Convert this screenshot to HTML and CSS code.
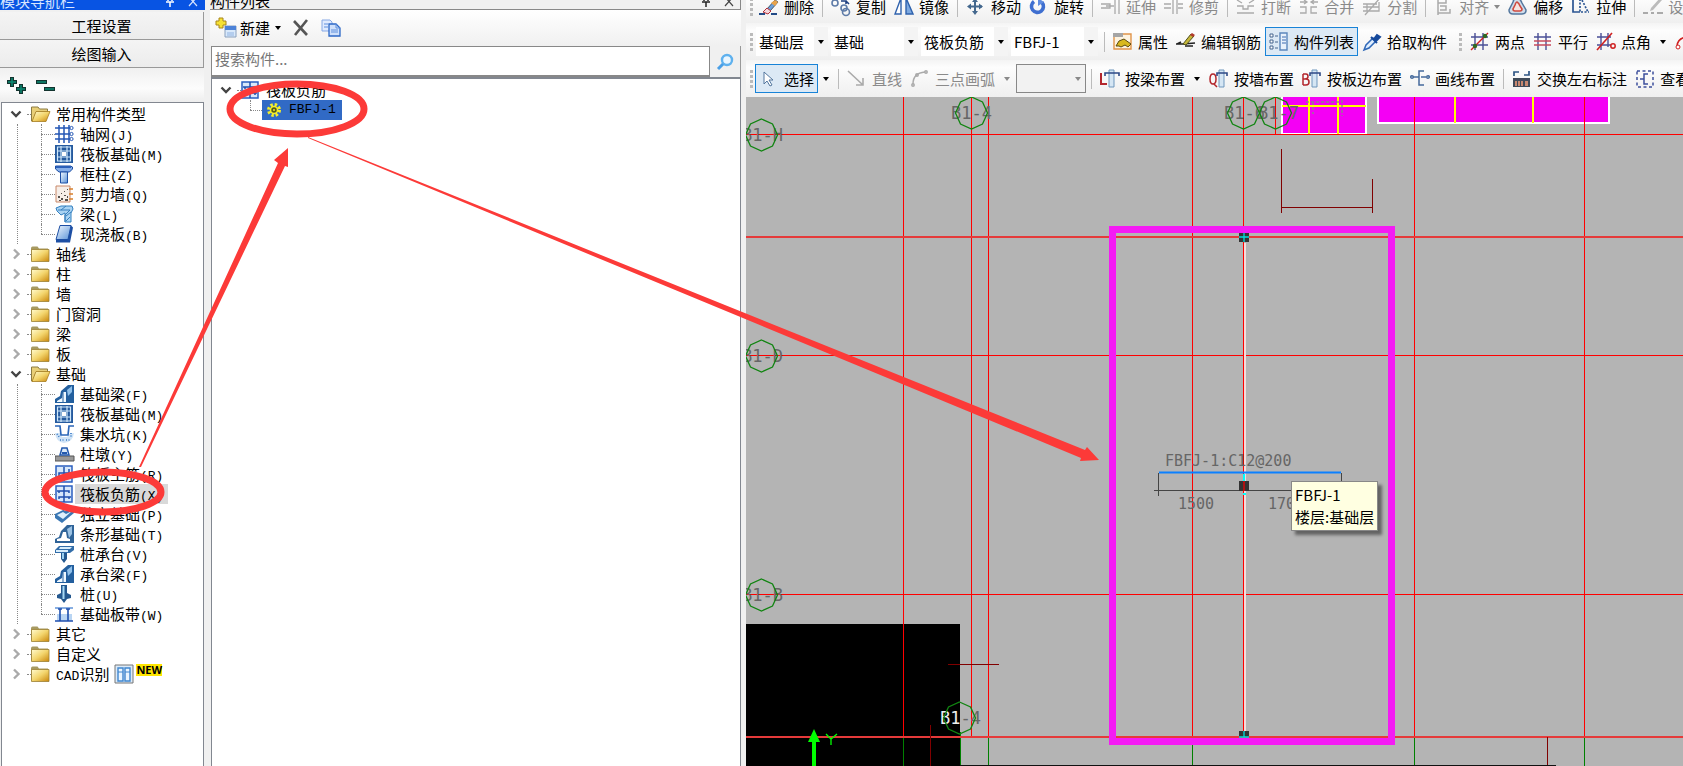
FILE: index.html
```html
<!DOCTYPE html>
<html lang="zh-CN">
<head>
<meta charset="utf-8">
<title>构件列表</title>
<link rel="stylesheet" href="styles.css">
</head>
<body>
<svg class="defs" aria-hidden="true">
  <defs>
    <linearGradient id="gold" x1="0" y1="0" x2="1" y2="1"><stop offset="0" stop-color="#fffbd0"/><stop offset=".5" stop-color="#f3d56c"/><stop offset="1" stop-color="#c9860c"/></linearGradient>
    <linearGradient id="blue" x1="0" y1="0" x2="1" y2="1"><stop offset="0" stop-color="#f2f9ff"/><stop offset="1" stop-color="#5b93d8"/></linearGradient>
    <symbol id="folder" viewBox="0 0 20 20"><path d="M0 4.500q0-2 1.500-2h5l1.500 2h9v12H0z" fill="#a79a62"/><path d="M0.500 5.500h17.500v12H0.500z" fill="url(#gold)" stroke="#9c8034" stroke-width=".8"/></symbol>
    <symbol id="folder-open" viewBox="0 0 20 20"><path d="M0.500 3h6.500l1.500 2h8v3H5L2 17H0.500z" fill="#e8cf78" stroke="#8c7c44"/><path d="M5 7.500H19l-4 10H1z" fill="url(#gold)" stroke="#a67c20" stroke-width=".8"/></symbol>
    <symbol id="open" viewBox="0 0 12 12"><path d="M1.500 3.500 6 8l4.500-4.500" fill="none" stroke="#444" stroke-width="2.400"/></symbol>
    <symbol id="closed" viewBox="0 0 12 12"><path d="M4 1.500 8.500 6 4 10.500" fill="none" stroke="#aaa" stroke-width="2.400"/></symbol>
    <symbol id="grid" viewBox="0 0 20 20"><path d="M4 1v18M9 1v18M14 1v18M0 4h15M0 10h15M0 15h15" stroke="#2457b5" stroke-width="1.500"/><g fill="#fff" stroke="#2457b5"><circle cx="16.500" cy="4" r="1.600"/><circle cx="16.500" cy="10" r="1.600"/><circle cx="16.500" cy="15" r="1.600"/></g></symbol>
    <symbol id="raft" viewBox="0 0 20 20"><path d="M0 1h18v18H0z" fill="#255a9e"/><path d="M6 2v16M12 2v16M2 7h14M2 13h14M2.500 3h13v14h-13z" fill="none" stroke="#cfe8fb" stroke-width="1.200"/><path d="M7 8h4v4H7z" fill="#fff"/></symbol>
    <symbol id="column" viewBox="0 0 20 20"><path d="M0.500 2h15l2 1v2l-3 3H4L0.500 5z" fill="#86aee8" stroke="#1d4fa4"/><path d="M5.500 8h7v11h-7z" fill="url(#blue)" stroke="#1d4fa4"/><path d="M1 3h15" stroke="#2b5fb8" stroke-width="2"/></symbol>
    <symbol id="wall" viewBox="0 0 20 20"><path d="M1 2h14v16H1z" fill="#f6eee8" stroke="#c98868"/><g fill="#55504c"><path d="M3 12h2v2H3zM6 14h2v2H6zM4 16h2v1H4zM9 11h2v1H9zM10 15h3v2h-3zM12 12h1v2h-1zM6 9h1v1H6zM9 7h1v1H9zM12 5h1v1h-1z"/></g><path d="M14 5h4M14 10h4M14 15h4" stroke="#d8802c" stroke-width="1.600"/></symbol>
    <symbol id="beam" viewBox="0 0 20 20"><path d="M1 4l5-2h11l1 3-2 4v9h-6V9L6 11 2 7z" fill="#a9d3f3" stroke="#3380c0"/><path d="M3 6h12l-5 5v7M6 6l5-4M11 17l4-4M11 12l5-4" fill="none" stroke="#377fbd"/></symbol>
    <symbol id="slab" viewBox="0 0 20 20"><path d="M5 1.500h11l-3 14H1z" fill="url(#blue)" stroke="#1d4fa4"/><path d="M1 15h12l3-13.500 2 2-3 15H1z" fill="#1d4fa4"/></symbol>
    <symbol id="fbeam" viewBox="0 0 20 20"><path d="M0 19v-4l5-3 1-5 7-6h6v18z" fill="#235f9e"/><path d="M2 17l5-3 1-6h3v10H2z" fill="#eff8ff"/><path d="M12 6l5-4v6l-4 4z" fill="#8fc0ea"/><path d="M8 8v10" stroke="#235f9e"/></symbol>
    <symbol id="pit" viewBox="0 0 20 20"><path d="M0 9q1 9 9 10 9-1 10-10l-5 1-2 3H7l-2-4z" fill="#cfe3f6"/><path d="M0 2h5l1 9h7l1-9h5" fill="none" stroke="#2b66b8" stroke-width="1.700"/><path d="M2 10l3 4M5 16h4M11 16h4M16 9v5" stroke="#3d7dc8" stroke-dasharray="1 1.500" stroke-width="1.700"/></symbol>
    <symbol id="pier" viewBox="0 0 20 20"><path d="M0 12h19v5H0z" fill="#999" stroke="#555"/><path d="M5 11 7 4h5l2 7z" fill="#dceaf8" stroke="#2259ae" stroke-width="1.500"/><path d="M7 9h5" stroke="#2259ae" stroke-width="2"/></symbol>
    <symbol id="mainbar" viewBox="0 0 20 20"><path d="M1 2h16v16H1z" fill="#d8e8fa" stroke="#2b5fc0" stroke-width="1.500"/><path d="M4 14V9h10V5M9 3v14" fill="none" stroke="#1f4fae" stroke-width="1.500"/></symbol>
    <symbol id="negbar" viewBox="0 0 20 20"><path d="M1 2h16v16H1z" fill="#d8e8fa" stroke="#2b5fc0" stroke-width="1.500"/><path d="M9 2v16M4 9V7h10v2M4 15v-2h10v2M2 7h3M13 13h3" fill="none" stroke="#1f4fae" stroke-width="1.500"/></symbol>
    <symbol id="isolated" viewBox="0 0 20 20"><path d="M0 10l8-4 11-4v7L7 19l-7-5z" fill="#3a77b4"/><path d="M2 11l6-3 3 2 6-3-9 8zM7 4l4-2 4 2-5 3z" fill="#dff0fc"/></symbol>
    <symbol id="strip" viewBox="0 0 20 20"><path d="M0 19v-4l4-2 2-6 6-6h7v18z" fill="#2f6398"/><path d="M2 17v-2l4-1 2-6h3l1 6 3 1v2z" fill="#fff"/><path d="M12 5l5-3v8l-3 4z" fill="#9bc2e4"/></symbol>
    <symbol id="cap" viewBox="0 0 20 20"><path d="M4 2h15v4l-4 3H0V6z" fill="#326da9"/><path d="M1 6h12v2H1zM5 3h12l-2 2H4z" fill="#d8edfb"/><path d="M6 9h6v6l-3 4-3-4z" fill="#24588f"/><path d="M7 9h2v6H7z" fill="#9cd0f0"/></symbol>
    <symbol id="pile" viewBox="0 0 20 20"><path d="M6 1h6v8l4 2v3l-4 1-3 4-3-4-4-1v-3l4-2z" fill="#24588f"/><path d="M7.500 2h2v13h-2z" fill="#a8daf5"/></symbol>
    <symbol id="band" viewBox="0 0 20 20"><path d="M2 10h15v7H2z" fill="#b9d5f3"/><path d="M0 4h18" stroke="#5f93d8" stroke-width="1.500"/><path d="M0 17h18M5 5v12M13 5v12M3 5h4M11 5h4" stroke="#1f4fae" stroke-width="1.600"/></symbol>
    <symbol id="cad" viewBox="0 0 20 20"><path d="M1 1h18v18H1z" fill="#dbeaf8" stroke="#777"/><path d="M4 4h5v13H4zM11 4h5v13h-5z" fill="#e9f5ff" stroke="#3f86cf" stroke-width="1.400"/><path d="M4 8h5M11 8h5" stroke="#3f86cf"/></symbol>
  </defs>
</svg>

<main class="app">
  <nav class="nav" aria-label="模块导航栏">
    <header class="title title-active">
      <h2>模块导航栏</h2>
      <span class="title-tools">
        <svg width="10" height="18" viewBox="0 0 10 18"><path d="M3 4v6M7 4v6M1 11h8M5 11v5" stroke="#fff" stroke-width="1.500"/></svg>
        <svg width="10" height="18" viewBox="0 0 10 18"><path d="M1 6l8 9M9 6l-8 9" stroke="#d5e4ff" stroke-width="1.200"/></svg>
      </span>
    </header>
    <button class="tab">工程设置</button>
    <button class="tab">绘图输入</button>
    <div class="expand">
      <button aria-label="全部展开"><svg width="22" height="20" viewBox="0 0 22 20"><path d="M6 1v10M1 6h10M15 8v10M10 13h10" stroke="#14342f" stroke-width="4"/><path d="M6 2v8M2 6h8M15 9v8M11 13h8" stroke="#0a8a74" stroke-width="1.500"/></svg></button>
      <button aria-label="全部折叠"><svg width="22" height="20" viewBox="0 0 22 20"><path d="M1 6h11M9 13h11" stroke="#14342f" stroke-width="4"/><path d="M2 6h9M10 13h9" stroke="#0a8a74" stroke-width="1.500"/></svg></button>
    </div>
    <ul class="tree">
      <li><div class="row"><svg class="chev"><use href="#open"/></svg><svg class="pic"><use href="#folder-open"/></svg><span>常用构件类型</span></div>
        <ul class="branch">
          <li><svg class="pic"><use href="#grid"/></svg><span>轴网<i>(J)</i></span></li>
          <li><svg class="pic"><use href="#raft"/></svg><span>筏板基础<i>(M)</i></span></li>
          <li><svg class="pic"><use href="#column"/></svg><span>框柱<i>(Z)</i></span></li>
          <li><svg class="pic"><use href="#wall"/></svg><span>剪力墙<i>(Q)</i></span></li>
          <li><svg class="pic"><use href="#beam"/></svg><span>梁<i>(L)</i></span></li>
          <li><svg class="pic"><use href="#slab"/></svg><span>现浇板<i>(B)</i></span></li>
        </ul></li>
      <li><div class="row"><svg class="chev"><use href="#closed"/></svg><svg class="pic"><use href="#folder"/></svg><span>轴线</span></div></li>
      <li><div class="row"><svg class="chev"><use href="#closed"/></svg><svg class="pic"><use href="#folder"/></svg><span>柱</span></div></li>
      <li><div class="row"><svg class="chev"><use href="#closed"/></svg><svg class="pic"><use href="#folder"/></svg><span>墙</span></div></li>
      <li><div class="row"><svg class="chev"><use href="#closed"/></svg><svg class="pic"><use href="#folder"/></svg><span>门窗洞</span></div></li>
      <li><div class="row"><svg class="chev"><use href="#closed"/></svg><svg class="pic"><use href="#folder"/></svg><span>梁</span></div></li>
      <li><div class="row"><svg class="chev"><use href="#closed"/></svg><svg class="pic"><use href="#folder"/></svg><span>板</span></div></li>
      <li><div class="row"><svg class="chev"><use href="#open"/></svg><svg class="pic"><use href="#folder-open"/></svg><span>基础</span></div>
        <ul class="branch">
          <li><svg class="pic"><use href="#fbeam"/></svg><span>基础梁<i>(F)</i></span></li>
          <li><svg class="pic"><use href="#raft"/></svg><span>筏板基础<i>(M)</i></span></li>
          <li><svg class="pic"><use href="#pit"/></svg><span>集水坑<i>(K)</i></span></li>
          <li><svg class="pic"><use href="#pier"/></svg><span>柱墩<i>(Y)</i></span></li>
          <li><svg class="pic"><use href="#mainbar"/></svg><span>筏板主筋<i>(R)</i></span></li>
          <li><svg class="pic"><use href="#negbar"/></svg><span class="current">筏板负筋<i>(X)</i></span></li>
          <li><svg class="pic"><use href="#isolated"/></svg><span>独立基础<i>(P)</i></span></li>
          <li><svg class="pic"><use href="#strip"/></svg><span>条形基础<i>(T)</i></span></li>
          <li><svg class="pic"><use href="#cap"/></svg><span>桩承台<i>(V)</i></span></li>
          <li><svg class="pic"><use href="#fbeam"/></svg><span>承台梁<i>(F)</i></span></li>
          <li><svg class="pic"><use href="#pile"/></svg><span>桩<i>(U)</i></span></li>
          <li><svg class="pic"><use href="#band"/></svg><span>基础板带<i>(W)</i></span></li>
        </ul></li>
      <li><div class="row"><svg class="chev"><use href="#closed"/></svg><svg class="pic"><use href="#folder"/></svg><span>其它</span></div></li>
      <li><div class="row"><svg class="chev"><use href="#closed"/></svg><svg class="pic"><use href="#folder"/></svg><span>自定义</span></div></li>
      <li><div class="row"><svg class="chev"><use href="#closed"/></svg><svg class="pic"><use href="#folder"/></svg><span><i>CAD</i>识别</span><svg class="pic"><use href="#cad"/></svg><b class="new">NEW</b></div></li>
    </ul>
  </nav>

  <section class="list" aria-label="构件列表">
    <header class="title">
      <h2>构件列表</h2>
      <span class="title-tools">
        <svg width="10" height="18" viewBox="0 0 10 18"><path d="M3 4v6M7 4v6M1 11h8M5 11v5" stroke="#222" stroke-width="1.500"/></svg>
        <svg width="10" height="18" viewBox="0 0 10 18"><path d="M1 6l8 9M9 6l-8 9" stroke="#444" stroke-width="1.200"/></svg>
      </span>
    </header>
    <div class="list-tools">
      <button class="new-item"><svg width="22" height="22" viewBox="0 0 22 22"><path d="M4 1h4v3h3v4H8v3H4V8H1V4h3z" fill="#f7e233" stroke="#a8861c"/><path d="M10 9h11v11H10z" fill="#d9e9fb" stroke="#8aa0bd"/><path d="M10 9h11v4H10z" fill="#4c82d8"/><path d="M12 16h7M12 18h7" stroke="#8fb1e0"/></svg>新建<span class="caret"></span></button>
      <button aria-label="删除"><svg width="16" height="18" viewBox="0 0 16 18"><path d="M1 2l13 14M14 1 2 16" stroke="#555" stroke-width="2.600"/></svg></button>
      <button aria-label="复制"><svg width="20" height="18" viewBox="0 0 20 18"><path d="M1 1h8l2 2v9H1z" fill="#dfeaff" stroke="#86a8e4"/><path d="M8 5h7l4 4v8H8z" fill="#cfe0fb" stroke="#2c67c6" stroke-width="1.300"/><path d="M15 5v4h4M10 11h7M10 13h7M3 5h4M3 8h4" fill="none" stroke="#5f8fdc"/></svg></button>
    </div>
    <form class="search">
      <input type="text" placeholder="搜索构件..." aria-label="搜索构件">
      <button type="button" aria-label="搜索"><svg width="18" height="18" viewBox="0 0 18 18"><circle cx="11" cy="7" r="5" fill="#eaf6ff" stroke="#5fb1ee" stroke-width="2.400"/><path d="M7 11l-5 5" stroke="#4a9fe6" stroke-width="3"/></svg></button>
    </form>
    <ul class="tree items">
      <li><div class="row"><svg class="chev"><use href="#open"/></svg><svg class="pic"><use href="#negbar"/></svg><span>筏板负筋</span></div>
        <ul class="branch">
          <li><span class="picked"><svg width="14" height="14" viewBox="0 0 14 14"><circle cx="7" cy="7" r="5" fill="none" stroke="#f4ee2a" stroke-width="4" stroke-dasharray="2.200 1.727"/><circle cx="7" cy="7" r="3.500" fill="#555b18" stroke="#f4ee2a" stroke-width="1.500"/><circle cx="7" cy="7" r="1" fill="#f4ee2a"/></svg><i>FBFJ-1</i></span></li>
        </ul></li>
    </ul>
  </section>

  <section class="work">
    <div class="bars">
      <div class="bar bar-cut">
        <span class="grip"></span>
        <button class="tool"><svg viewBox="0 0 20 20"><path d="M8 12 16 3l3 2-8 9z" fill="#6aa0dc" stroke="#456"/><path d="M12 6 16 3l3 2-3 4z" fill="#e8a34a"/><path d="M4 15l4-4 4 3-3 3z" fill="#f5d7dc" stroke="#b03038"/><path d="M0 17h6M12 17h6" stroke="#224a86" stroke-width="2"/></svg>删除</button>
        <span class="sep"></span>
        <button class="tool"><svg viewBox="0 0 20 20" fill="none" stroke="#5f7ca8" stroke-width="1.600"><circle cx="4" cy="6" r="3"/><circle cx="13" cy="11" r="3"/><circle cx="15" cy="15" r="3.500"/><path d="M10 4h5v3M15 4l3 3" stroke="#1e3f80"/></svg>复制</button>
        <button class="tool"><svg viewBox="0 0 20 20"><path d="M7 1v16H1z" fill="#fff" stroke="#2f62ad" stroke-width="1.400"/><path d="M12 1v16h7z" fill="#7da9e0" stroke="#2f62ad" stroke-width="1.400"/></svg>镜像</button>
        <span class="sep"></span>
        <button class="tool"><svg viewBox="0 0 20 20"><path d="M9 3v13M3 9.500h13" stroke="#44688e" stroke-width="2"/><path d="M9 1l3 4H6zM9 18l3-4H6zM1 9.500l4-3v6zM17 9.500l-4-3v6z" fill="#44688e"/></svg>移动</button>
        <button class="tool"><svg viewBox="0 0 20 20"><path d="M5 4.500a6 6 0 1 0 8 1" fill="none" stroke="#3f6fd0" stroke-width="3.600"/><path d="M9 1v8l6-4z" fill="#5f8ce0"/></svg>旋转</button>
        <span class="sep"></span>
        <button class="tool" disabled><svg viewBox="0 0 20 20" fill="none" stroke="#aaa" stroke-width="1.300"><path d="M0 7h9v4H0M5 9h8M14 2v15M18 2v15"/></svg>延伸</button>
        <button class="tool" disabled><svg viewBox="0 0 20 20" fill="none" stroke="#aaa" stroke-width="1.300"><path d="M0 7h7M0 11h7M9 2v15M13 2v15M14 7h5M14 11h5"/></svg>修剪</button>
        <span class="sep"></span>
        <button class="tool" disabled><svg viewBox="0 0 20 20" fill="none" stroke="#aaa" stroke-width="1.300"><path d="M1 3l5 3M18 3l-5 3M1 9h6v3h5V9h6M1 16h17"/></svg>打断</button>
        <button class="tool" disabled><svg viewBox="0 0 20 20" fill="none" stroke="#aaa" stroke-width="1.300"><path d="M1 5h6M19 5h-6M5 3l3 2-3 2M15 3l-3 2 3 2M1 10h6v6H1M18 10h-6v6h6"/></svg>合并</button>
        <button class="tool" disabled><svg viewBox="0 0 20 20" fill="none" stroke="#aaa" stroke-width="1.300"><path d="M1 7h14M1 14h16V5M5 7v7M3 18 18 1M1 10h16"/></svg>分割</button>
        <span class="sep"></span>
        <button class="tool" disabled><svg viewBox="0 0 20 20" fill="none" stroke="#aaa" stroke-width="1.500"><path d="M4 0v18M4 2h8v4H4M6 9h6v4H6M4 16h12v-4"/></svg>对齐<span class="caret"></span></button>
        <button class="tool"><svg viewBox="0 0 20 20"><path d="M9 1q3 0 5 5l4 7q0 4-4 4H5q-4 0-4-4l4-8q1-4 4-4z" fill="#cfdcea" stroke="#54779e" stroke-width="1.500"/><path d="M9 5q2 1 3 4l2 3q0 2-2 2H7q-2 0-2-2l2-4q1-3 2-3z" fill="#f5e3e0" stroke="#cf4b40" stroke-width="1.600"/></svg>偏移</button>
        <button class="tool"><svg viewBox="0 0 20 20" fill="none" stroke="#2b5593" stroke-width="1.700"><path d="M2 1v14h7M2 2h7"/><path d="M9 2v13h9M11 3l6 12" stroke-dasharray="2 1.500"/></svg>拉伸</button>
        <span class="sep"></span>
        <button class="tool" disabled><svg viewBox="0 0 20 20"><path d="M17 1 8 11l-1 3 3-1 9-10z" fill="#bbb"/><path d="M0 16h5M8 16h3M14 16h6" stroke="#aaa" stroke-width="2"/></svg>设置</button>
      </div>
      <div class="bar">
        <span class="grip"></span>
        <div class="combos">
          <label class="combo short"><select aria-label="楼层"><option>基础层</option></select></label>
          <label class="combo"><select aria-label="类别"><option>基础</option></select></label>
          <label class="combo"><select aria-label="构件类型"><option>筏板负筋</option></select></label>
          <label class="combo"><select aria-label="构件"><option>FBFJ-1</option></select></label>
        </div>
        <span class="sep"></span>
        <button class="tool"><svg viewBox="0 0 20 20"><path d="M1 2h17v15H1z" fill="#fdf3e0" stroke="#e0944a" stroke-width="1.400"/><path d="M0 1h10v4H0z" fill="#a5a5a5"/><path d="M3 14l3-5 5-2 7 5-3 3-3-2-4 2-2-1z" fill="#d8b81e" stroke="#5c4a10"/></svg>属性</button>
        <button class="tool"><svg viewBox="0 0 20 20"><path d="M0 12h7l12-1M1 12l4-2M9 14h8" fill="none" stroke="#222" stroke-width="1.500"/><path d="M7 12 15 2l3 2L10 13z" fill="#c6b73a" stroke="#50501a"/><path d="M14 3l2-2 3 2-2 2z" fill="#b23a2c"/></svg>编辑钢筋</button>
        <button class="tool active"><svg viewBox="0 0 20 20"><path d="M1 2h3v3H1zM1 8h3v3H1zM1 14h3v3H1z" fill="#fff" stroke="#44648e"/><path d="M6 4h3M6 10h3M6 16h3" stroke="#44648e"/><path d="M11 1h7v17h-7z" fill="#e8f1fb" stroke="#5b87bd" stroke-width="1.400"/><path d="M13 5h4M13 8h4M13 11h4" stroke="#3c6bb0"/></svg>构件列表</button>
        <button class="tool"><svg viewBox="0 0 20 20"><path d="M2 18l2-5 7-7 3 3-7 7z" fill="#dfeeff" stroke="#2f68b8" stroke-width="1.500"/><path d="M9 5l6 6M12 7l3-4 3 2-4 4z" fill="#174a9c" stroke="#174a9c" stroke-width="2"/></svg>拾取构件</button>
        <span class="grip apart"></span>
        <button class="tool"><svg viewBox="0 0 20 20"><path d="M5 1v17M13 1v17M1 5h17M1 13h17" stroke="#4a4f96" stroke-width="1.400"/><path d="M1 18 18 1" stroke="#d02020" stroke-width="1.500"/><circle cx="5" cy="14" r="2.200" fill="#2f6a22"/><circle cx="15" cy="4" r="2.200" fill="#2f6a22"/></svg>两点</button>
        <button class="tool"><svg viewBox="0 0 20 20"><path d="M5 1v17M13 1v17M1 5h17" stroke="#4a4f96" stroke-width="1.400"/><path d="M1 9h17M1 13h17" stroke="#c64a5e" stroke-width="1.400"/></svg>平行</button>
        <button class="tool"><svg viewBox="0 0 20 20"><path d="M5 1v17M12 1v14M1 5h14M1 13h14" stroke="#4a4f96" stroke-width="1.400"/><path d="M1 18 16 1" stroke="#d02020" stroke-width="1.600"/><circle cx="17" cy="14" r="2.200" fill="none" stroke="#d02020" stroke-width="1.500"/></svg>点角</button>
        <button class="split" aria-label="点角选项"><span class="caret"></span></button>
        <button class="tool"><svg viewBox="0 0 20 20"><path d="M2 14Q3 5 14 5" fill="none" stroke="#d02020" stroke-width="1.600"/><circle cx="3" cy="15" r="2" fill="#fff" stroke="#d02020"/></svg>三点辅轴</button>
      </div>
      <div class="bar">
        <span class="grip"></span>
        <button class="tool active"><svg viewBox="0 0 20 20"><path d="M5 3v12l3-3 3 5 2-1-3-5h4z" fill="#fff" stroke="#54779e"/></svg>选择</button>
        <button class="split" aria-label="选择选项"><span class="caret"></span></button>
        <span class="sep"></span>
        <button class="tool" disabled><svg viewBox="0 0 20 20"><path d="M1 2l15 14M9 16h7V9" fill="none" stroke="#aaa" stroke-width="1.600"/></svg>直线</button>
        <button class="tool" disabled><svg viewBox="0 0 20 20" fill="none" stroke="#aaa" stroke-width="1.500"><path d="M3 15Q3 4 15 3"/><circle cx="3" cy="16" r="1.200"/><circle cx="7" cy="6" r="1.200"/><circle cx="16" cy="3" r="1.200"/></svg>三点画弧</button>
        <button class="split" disabled aria-label="画弧选项"><span class="caret"></span></button>
        <label class="combo framed"><select aria-label="绘制方式"><option></option></select></label>
        <span class="sep"></span>
        <button class="tool"><svg viewBox="0 0 20 20"><path d="M1 4v11h6" fill="none" stroke="#b3262c" stroke-width="2"/><path d="M9 1h5v17H9z" fill="#d5e6f4" stroke="#6f97bd"/><path d="M5 7V4h14v3" fill="none" stroke="#2e4a86" stroke-width="1.600"/></svg>按梁布置</button>
        <button class="split" aria-label="按梁布置选项"><span class="caret"></span></button>
        <button class="tool"><svg viewBox="0 0 20 20"><path d="M5 15l3 3M4 5q-3 0-3 5t3 5q3 0 3-5T4 5" fill="none" stroke="#b3262c" stroke-width="1.500"/><path d="M10 1h5v17h-5z" fill="#d5e6f4" stroke="#6f97bd"/><path d="M8 7V4h10v3" fill="none" stroke="#2e4a86" stroke-width="1.600"/></svg>按墙布置</button>
        <button class="tool"><svg viewBox="0 0 20 20"><path d="M1 5v11M1 5h3q2 0 2 2.500T3 10h1q3 0 3 3t-3 3H1M1 10h3" fill="none" stroke="#b3262c" stroke-width="1.500"/><path d="M10 1h5v17h-5z" fill="#d5e6f4" stroke="#6f97bd"/><path d="M8 7V4h10v3" fill="none" stroke="#2e4a86" stroke-width="1.600"/></svg>按板边布置</button>
        <button class="tool"><svg viewBox="0 0 20 20" fill="none" stroke="#456a9c" stroke-width="1.500"><path d="M14 2H9v14h5M3 8h6M11 8h5"/><circle cx="2" cy="8" r="1.300"/><circle cx="18" cy="8" r="1.300"/></svg>画线布置</button>
        <span class="sep"></span>
        <button class="tool"><svg viewBox="0 0 20 20"><path d="M2 7V3h5M12 6h5V2" fill="none" stroke="#2e5584" stroke-width="1.700"/><path d="M1 9h17v9H1z" fill="#3f4a58"/><path d="M3 12h2v5H3zM6 12h2v5H6zM9 12h2v5H9zM13 12h3v5h-3z" fill="#c88870"/></svg>交换左右标注</button>
        <button class="tool"><svg viewBox="0 0 20 20" fill="none" stroke="#3d4f9c" stroke-width="1.500"><path d="M2 2h16v16H2z" stroke-dasharray="3 2.500"/><path d="M13 5H9v10h4M5 10h4"/></svg>查看布筋</button>
      </div>
    </div>

    <div class="canvas">
      <svg class="drawing">
        <g transform="translate(-746 -97)">
          <path d="M746 624h214v142H746z" fill="#000"/>
          <g fill="#f400f4" stroke="#fff" stroke-width="2"><path d="M1282 90h84v44h-84z"/><path d="M1378 90h231v33h-231z"/></g>
          <path d="M1309 97v37M1338 97v37M1282 106h84M1455 97v26M1533 97v26" stroke="#ff0" stroke-width="2"/>
          <path d="M1313 102v12M1342 100v16M1306 102h34" stroke="#888" stroke-width="2" stroke-dasharray="3 2" opacity=".7"/>
          <g stroke="#008000" fill="none"><path d="M903.500 737v29M960.500 732v34M988.500 737v29M1192.500 737v29M1414.500 737v29M1584.500 737v29"/></g>
          <g stroke="#f00" fill="none">
            <path d="M903.500 97v640M971.500 97v640M988.500 97v640M1192.500 97v640M1243.500 97v640M1275.500 97v38M1414.500 97v640M1584.500 97v640"/>
            <path d="M746 134.500h937M746 355.500h937M746 594.500h937"/>
            <path d="M746 237h937M746 737h937" stroke="#e53a3a" stroke-width="2"/>
          </g>
          <g stroke="#800000" fill="none"><path d="M1281.500 149v64M1281 207.500h91M1372.500 179v34M948 664.500h51M930.500 725v41M1547.500 737v29"/></g>
          <path d="M960 765.500h596" stroke="#111"/>
          <path d="M1245 243v488" stroke="#f5dcdc" stroke-width="2"/>
          <g class="mark">
            <text x="951" y="119">B1-4</text><text x="1224" y="119">B1-6</text><text x="1258" y="119">B1-7</text>
            <text x="742" y="141">B1-H</text><text x="742" y="362">B1-D</text><text x="742" y="601">B1-B</text>
            <text x="940" y="724"><tspan class="light">B1</tspan>-4</text>
          </g>
          <g fill="none" stroke="#118511" stroke-width="1.300">
            <path id="ring" d="M971.500 97l11 5 5 11-5 11-11 5-11-5-5-11 5-11z"/>
            <use href="#ring" x="272"/><use href="#ring" x="304"/>
            <use href="#ring" x="-210" y="22"/><use href="#ring" x="-210" y="243"/><use href="#ring" x="-210" y="482"/><use href="#ring" x="-12" y="605"/>
          </g>
          <path d="M812 766v-24h-4l6-13 6 13h-4v24z" fill="#0f0"/><path d="M826 734l5 5 6-5M831 739v6" fill="none" stroke="#0f0" stroke-width="1.300"/>
          <g fill="none" stroke="#444"><path d="M1158.500 496v-23M1341.500 473v8M1154 490.500h187"/></g>
          <path d="M1159 472.500h182" stroke="#0a80ff" stroke-width="2"/>
          <path d="M1239 481h10v10h-10z" fill="#333"/><path d="M1244 480v11" stroke="#b01010" stroke-width="2"/><path d="M1244 474v7M1243 494h3" stroke="#0ff" stroke-width="2"/>
          <g fill="#333"><path d="M1239 232h10v10h-10z"/><path d="M1239 731h10v6h-10z"/></g>
          <path d="M1239 237h10M1244 232v10M1239 737h10M1244 731v6" stroke="#0dd" stroke-width="1.300"/>
          <g class="dim"><text x="1165" y="466">FBFJ-1:C12@200</text><text x="1178" y="509">1500</text><text x="1268" y="509">1700</text></g>
          <path d="M1112.500 229.500h279v512h-279z" fill="none" stroke="#f41bf4" stroke-width="7"/>
        </g>
      </svg>
      <div class="tip" role="tooltip">FBFJ-1<br>楼层:基础层</div>
    </div>
  </section>
</main>

<svg class="notes" aria-hidden="true">
  <g fill="none" stroke="#fc3a38" stroke-width="7"><ellipse cx="297" cy="109" rx="67" ry="25"/><ellipse cx="103" cy="492" rx="58" ry="20"/></g>
  <path fill="#fc3a38" d="M139 467L278 163 274 160 288 148 288 167 285 166 141 467z"/>
  <path fill="#fc3a38" d="M308 137L1085 450 1087 447 1099 460 1080 461 1081 458 308 138z"/>
</svg>
</body>
</html>
```
FILE: styles.css
```css
* { box-sizing: border-box; }
body {
  margin: 0;
  overflow: hidden;
  background: #f0f0f0;
  color: #000;
  font: 15px/20px "Noto Sans CJK SC", sans-serif;
}
button, input, select { font: inherit; color: inherit; }
button { border: 0; padding: 0; background: none; }
svg { flex: none; display: block; }
ul { list-style: none; margin: 0; padding: 0; }
i { font: 13px/20px "Liberation Mono", monospace; }
.defs { position: absolute; width: 0; height: 0; }
.notes { position: absolute; left: 0; top: 0; width: 100%; height: 100%; pointer-events: none; }

.app {
  display: grid;
  grid-template-columns: 205px 531px minmax(0, 1fr);
  column-gap: 5px;
  height: 100vh;
}
.nav, .list { display: flex; flex-direction: column; min-height: 0; overflow: hidden; }

.title {
  display: flex;
  flex: none;
  align-items: flex-end;
  justify-content: space-between;
  height: 10px;
  overflow: hidden;
  border-bottom: 1px solid #888;
  border-right: 1px solid #888;
}
.title h2 { margin: 0; font-size: 15px; font-weight: 400; line-height: 16px; }
.title-tools { display: flex; gap: 13px; padding-right: 6px; }
.title-active { background: #0854e3; border-color: #0854e3; color: #d8e6ff; }

.tab {
  flex: none;
  width: 204px;
  height: 28px;
  border: solid #999;
  border-width: 0 1px 1px 0;
  background: linear-gradient(#f4f4f4, #ececec);
}
.title + .tab { margin-top: 2px; }
.expand {
  display: flex;
  gap: 7px;
  align-items: center;
  flex: none;
  width: 204px;
  height: 34px;
  padding: 2px 0 0 6px;
  background: linear-gradient(#f0f0f0, #fcfcfc 60%, #ededed);
}

.tree { flex: 1; background: #fff; border: 1px solid #828790; border-bottom: 0; }
.nav .tree { width: 203px; margin-left: 1px; padding: 1px 0 0 1px; }
.row { display: flex; align-items: center; height: 20px; padding-left: 7px; }
.row::before { content: ""; order: 1; width: 4px; border-top: 1px dotted #888; }
.row > * { order: 2; }
.row .chev { order: 0; margin-right: 5px; }
.chev { width: 12px; height: 12px; }
.pic { width: 20px; height: 20px; }
.tree span { height: 20px; padding: 0 5px; white-space: nowrap; }
.branch { position: relative; }
.branch::before { content: ""; position: absolute; left: 14px; top: 0; bottom: 0; border-left: 1px dotted #888; }
.branch li { position: relative; display: flex; align-items: center; height: 20px; margin-left: 38px; }
.branch li::before { content: ""; width: 14px; border-top: 1px dotted #888; }
.branch li::after { content: ""; position: absolute; left: 0; top: 0; height: 20px; border-left: 1px dotted #888; }
.branch li:last-child::after { height: 10px; }
.current { background: #d9d9d9; }
.new { align-self: flex-start; margin-left: 2px; background: #ffe600; font: 700 11px/12px "Noto Sans", sans-serif; }

.list-tools {
  display: flex;
  flex: none;
  gap: 12px;
  align-items: center;
  height: 36px;
  padding-left: 5px;
  background: linear-gradient(#fff, #f0f0f0);
}
.new-item { display: flex; gap: 3px; align-items: center; }
.new-item .caret { margin-left: 2px; }
.search { display: flex; flex: none; height: 31px; margin-left: 1px; }
.search input { flex: 1; min-width: 0; padding: 0 3px 4px; border: 1px solid #888; border-bottom-width: 2px; background: #fff; }
.search input::placeholder { color: #777; opacity: 1; }
.search button { display: flex; align-items: center; justify-content: center; width: 31px; border-right: 1px solid #999; }
.items { margin-left: 1px; border-top-width: 2px; padding-top: 1px; }
.items .row { padding-left: 8px; }
.items .branch::before { display: none; }
.items .branch li { margin-left: 38px; }
.items .branch li::before { width: 12px; }
.items .picked { display: flex; gap: 8px; align-items: center; padding: 0 6px 0 5px; background: #316ac5; }

.work { display: flex; flex-direction: column; min-width: 0; min-height: 0; }
.bars { flex: none; overflow: hidden; white-space: nowrap; }
.bar {
  display: flex;
  align-items: center;
  height: 37px;
  padding-left: 4px;
  background: linear-gradient(#f4f4f4, #fdfdfd 20%, #efefef);
}
.bar > * { flex: none; }
.bar-cut { height: 32px; margin-top: -9px; }
.grip { width: 3px; height: 18px; margin-right: 2px; background: repeating-linear-gradient(#bbb 0 3px, transparent 3px 5px); }
.apart { margin: 0 4px 0 8px; }
.sep { width: 1px; height: 20px; margin: 0 4px; background: #bbb; }
.tool { display: flex; gap: 5px; align-items: center; height: 29px; padding: 0 4px; white-space: nowrap; }
.tool > svg { width: 20px; height: 20px; }
.tool:disabled, .split:disabled { color: #8a8a8a; }
.active { padding: 0 3px; border: 1px solid #1883d7; background: #dce9f5; }
.split { display: flex; align-items: center; justify-content: center; width: 16px; height: 29px; }
.caret { border: 3px solid transparent; border-top: 4px solid currentColor; border-bottom: 0; }
.combos { display: flex; gap: 3px; padding: 0 2px 0 1px; }
.combo { display: flex; align-items: center; width: 87px; height: 29px; background: linear-gradient(90deg, #fff calc(100% - 14px), #f4f4f4 0); }
.combo select { flex: 1; min-width: 0; height: 27px; padding: 0 3px; border: 0; background: none; appearance: none; }
.combo::after { content: ""; margin-right: 4px; border: 3px solid transparent; border-top: 4px solid #000; border-bottom: 0; }
.short { width: 72px; }
.framed { width: 70px; margin: 0 1px; border: 1px solid #888; background: #f2f2f2; }
.framed::after { border-top-color: #888; }

.canvas { position: relative; flex: 1; min-height: 0; overflow: hidden; background: #b4b4b4; }
.drawing { width: 100%; height: 100%; }
.mark { font: 17px "DejaVu Sans Mono", monospace; fill: #666; }
.light { fill: #eee; }
.dim { font: 15px "DejaVu Sans Mono", monospace; fill: #666; }
.tip {
  position: absolute;
  left: 545px;
  top: 384px;
  padding: 2px 3px;
  border: 1px solid #888;
  background: #ffffe1;
  box-shadow: 4px 4px 3px rgba(0, 0, 0, .45);
  line-height: 22px;
}
```
